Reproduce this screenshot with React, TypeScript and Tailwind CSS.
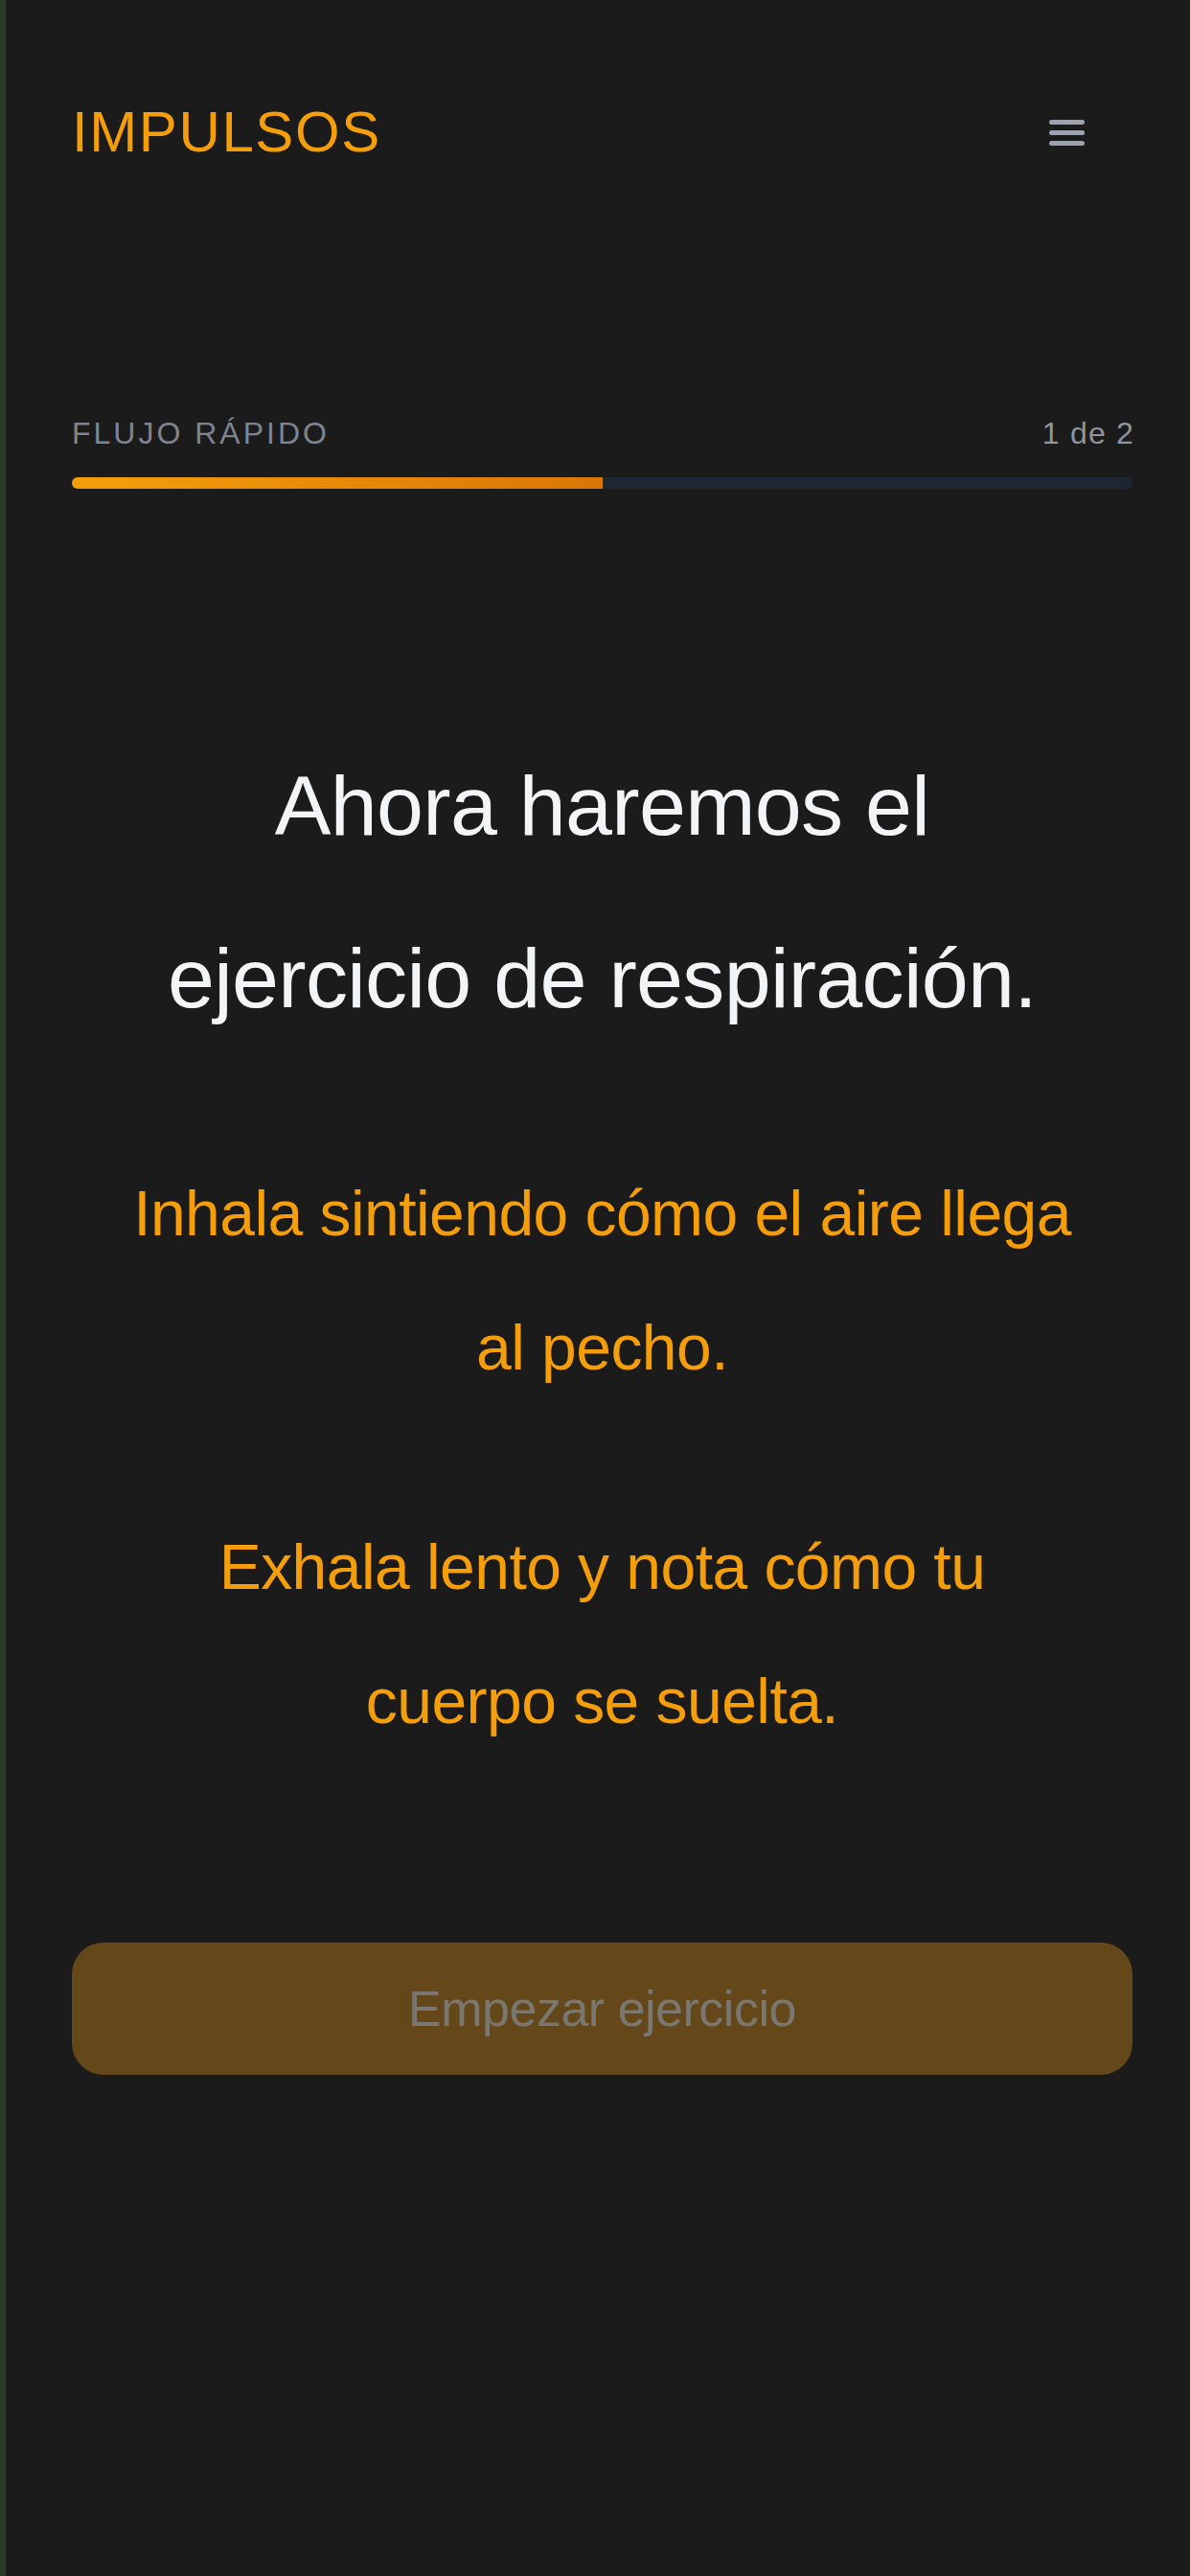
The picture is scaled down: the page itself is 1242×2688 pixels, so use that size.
export default function App() {
  return (
    <div className="min-h-[2688px] w-full border-l-[6px] border-[#2c3a2a] bg-[#1b1b1b] font-['Liberation_Sans',Arial,sans-serif]">
      <div className="pl-[69px] pr-[60px] pt-[96px]">
        {/* Top bar */}
        <header className="flex h-[84px] items-center justify-between">
          <h1 className="text-[60px] leading-[84px] tracking-[1.6px] text-[#f59e0b]">IMPULSOS</h1>
          <button className="mr-[50px] flex w-[37px] flex-col gap-[6px]" aria-label="Menú">
            <span className="h-[5px] rounded-full bg-[#9ca3af]" />
            <span className="h-[5px] rounded-full bg-[#9ca3af]" />
            <span className="h-[5px] rounded-full bg-[#9ca3af]" />
          </button>
        </header>

        {/* Progress */}
        <div className="mt-[250px]">
          <div className="flex h-[44px] items-center justify-between leading-[44px]">
            <span className="text-[32px] tracking-[3px] text-[#7e8490]">FLUJO RÁPIDO</span>
            <span className="mr-[-2px] text-[32px] tracking-[1.2px] text-[#8f95a0]">1 de 2</span>
          </div>
          <div className="mt-[24px] h-[12px] w-full overflow-hidden rounded-full bg-[#1f2633]">
            <div className="h-full w-1/2 bg-linear-to-r from-[#f59e0b] to-[#d97706]" />
          </div>
        </div>

        {/* Copy */}
        <h2 className="mt-[241px] text-center text-[88px] leading-[180px] tracking-[-0.7px] text-[#f3f4f6]">
          Ahora haremos el
          <br />
          ejercicio de respiración.
        </h2>
        <p className="mt-[85px] text-center text-[66px] leading-[140px] tracking-[-0.55px] text-[#f59e0b]">
          Inhala sintiendo cómo el aire llega
          <br />
          al pecho.
        </p>
        <p className="mt-[89px] text-center text-[66px] leading-[140px] tracking-[-0.55px] text-[#f59e0b]">
          Exhala lento y nota cómo tu
          <br />
          cuerpo se suelta.
        </p>

        <button
          disabled
          className="mt-[182px] flex h-[138px] w-full items-center justify-center rounded-[33px] bg-[#644819] text-[52px] tracking-[-0.5px] text-[#7a7670]"
        >
          Empezar ejercicio
        </button>
      </div>
    </div>
  )
}
